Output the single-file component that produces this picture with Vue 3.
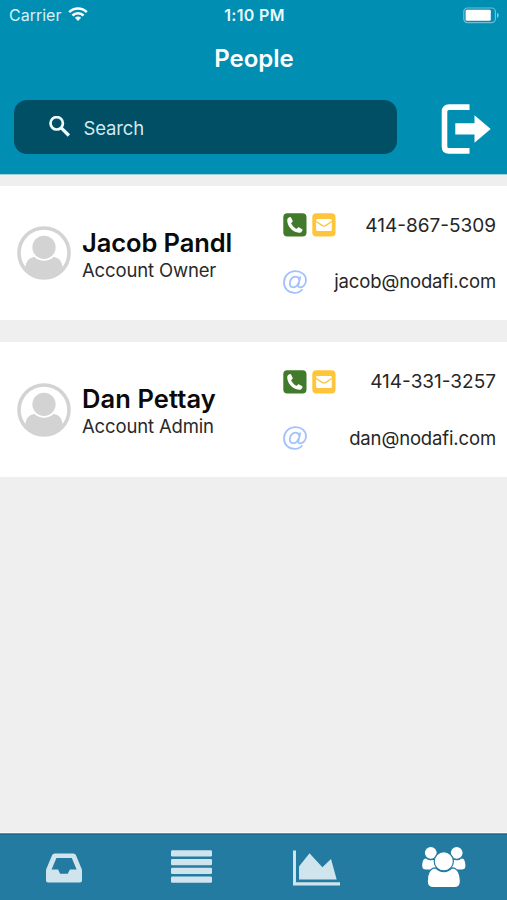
<script setup>
const people = [
  { name: 'Jacob Pandl', role: 'Account Owner', phone: '414-867-5309', email: 'jacob@nodafi.com' },
  { name: 'Dan Pettay', role: 'Account Admin', phone: '414-331-3257', email: 'dan@nodafi.com' },
]
</script>

<template>
  <div class="screen">
    <header class="header">
      <div class="status">
        <div class="carrier">
          <span>Carrier</span>
          <svg class="wifi" width="20" height="14" viewBox="0 0 20 14">
            <g fill="none" stroke="#fff" stroke-width="2.5">
              <path d="M1.2 5.2C6.2 .3 13.8 .3 18.8 5.2" />
              <path d="M4.4 8.5C7.6 5.4 12.4 5.4 15.6 8.5" />
            </g>
            <path d="M6.9 10.8C8.7 9.1 11.3 9.1 13.1 10.8L10 13.9Z" fill="#fff" />
          </svg>
        </div>
        <span class="time">1:10 PM</span>
        <svg class="battery" width="37" height="17" viewBox="0 0 37 17">
          <rect x=".8" y="1" width="31.6" height="14.6" rx="3.6" fill="none" stroke="#6fbdd3" stroke-width="1.2" />
          <rect x="2.6" y="2.8" width="25.2" height="11" rx="1.4" fill="#fff" />
          <path d="M34 5.7C36.4 6.8 36.4 9.8 34 10.9Z" fill="#7cc4d8" />
        </svg>
      </div>
      <h1 class="title">People</h1>
      <div class="tools">
        <div class="search">
          <svg width="22" height="22" viewBox="0 0 22 22" fill="none" stroke="#f0fcff">
            <circle cx="7.7" cy="7.3" r="6.2" stroke-width="2.7" />
            <path d="M12.2 11.8L19.9 19.5" stroke-width="3.2" />
          </svg>
          <span>Search</span>
        </div>
        <svg class="logout" width="50" height="50" viewBox="0 0 50 50">
          <path d="M28.5 3.1H8Q3.5 3.1 3.5 7.6V42.4Q3.5 46.9 8 46.9H28.5" fill="none" stroke="#fff" stroke-width="5.6" />
          <path d="M14.3 19.3H33.5V11.3L49.7 25L33.5 38.7V30.6H14.3Z" fill="#fff" />
        </svg>
      </div>
    </header>

    <main class="list">
      <article v-for="p in people" :key="p.email" class="card">
        <svg class="avatar" width="54" height="54" viewBox="0 0 54 54">
          <circle cx="27" cy="27" r="25" fill="#fff" stroke="#d3d3d3" stroke-width="3.6" />
          <path d="M8 43C9 34.5 12.5 31.5 17.5 31C22.5 36 31.5 36 36.5 31C41.5 31.5 45 34.5 46 43C36.5 55.5 17.5 55.5 8 43Z" fill="#d3d3d3" />
          <circle cx="27" cy="21.3" r="11.6" fill="#d3d3d3" />
        </svg>
        <div class="who">
          <div class="name">{{ p.name }}</div>
          <div class="role">{{ p.role }}</div>
        </div>
        <div class="contact">
          <div class="line">
            <div class="icons">
              <svg width="24" height="24" viewBox="0 0 24 24">
                <rect x=".3" y=".3" width="23.2" height="23.2" rx="4" fill="#417a2b" />
                <path d="M4.2 7.1C4.3 5.7 5.6 4.4 7 4.1C7.6 4 8 4.3 8.3 4.9L9.6 7.7C9.9 8.5 9.5 9 8.8 9.5C8.1 10 8.1 10.4 8.5 11.1C9.5 13 11 14.6 12.9 15.6C13.6 16 14 15.8 14.5 15.1C15 14.4 15.5 14.1 16.2 14.5L18.8 15.9C19.4 16.2 19.7 16.6 19.5 17.2C19 18.8 17.7 19.8 16 19.8C9.8 19.6 4 13.2 4.2 7.1Z" fill="#fff" />
              </svg>
              <svg width="24" height="24" viewBox="0 0 24 24">
                <rect x=".3" y=".3" width="23.2" height="23.2" rx="4" fill="#fec53a" />
                <rect x="4.1" y="5.9" width="15.7" height="12.2" rx="1.4" fill="#fff" />
                <path d="M3.8 8.2L10 12.4Q12 13.8 14 12.4L20 8.2" fill="none" stroke="#fec53a" stroke-width="1.3" />
              </svg>
            </div>
            <span class="phone">{{ p.phone }}</span>
          </div>
          <div class="line">
            <svg width="24" height="24" viewBox="0 0 24 24" fill="none" stroke="#a4c2fa" stroke-width="1.8" stroke-linejoin="round">
              <path d="M19.4 19.2C17.4 21.7 14.8 22.9 11.6 22.9C5.3 22.9 1 18.5 1 12.4C1 6.1 5.9 1.1 12.4 1.1C18.5 1.1 23 4.9 23 10.2C23 14.4 20 17.4 17.2 17.4C15.4 17.4 15.1 16.2 15.5 14.4L17.4 6.5" />
              <path d="M16.3 10.3C15.9 7.8 14.6 6.6 12.6 6.6C9.3 6.6 6.8 9.9 6.8 13.3C6.8 15.9 8.1 17.3 10.3 17.3C12.9 17.3 14.8 15.4 15.6 12.6" />
            </svg>
            <span class="email">{{ p.email }}</span>
          </div>
        </div>
      </article>
    </main>

    <nav class="tabs">
      <div class="tab">
        <svg class="inbox" width="36" height="30" viewBox="0 0 36 30">
          <path fill-rule="evenodd" d="M8.8 .4H27.4Q29.2 .4 29.9 2L35.6 15.8Q36 16.8 36 18V27.4Q36 29.4 34 29.4H2Q0 29.4 0 27.4V18Q0 16.8 .4 15.8L6.2 2Q6.9 .4 8.8 .4ZM10.4 4.9L5.6 16.5H12.1L14.1 20.8H21.8L23.9 16.5H30.6L25.8 4.9Z" fill="#d0e4ed" />
        </svg>
      </div>
      <div class="tab">
        <svg class="rows" width="41" height="34" viewBox="0 0 41 34" fill="#d0e4ed">
          <rect v-for="n in 4" :key="n" x="0" :y="(n - 1) * 8.7 + .3" width="41" height="6.3" rx="1.3" />
        </svg>
      </div>
      <div class="tab">
        <svg class="chart" width="47" height="36" viewBox="0 0 47 36" fill="#d0e4ed">
          <path d="M0 .4H3V32.2H47V35.5H0Z" />
          <path d="M6 29.5V16.5L16.5 3.3L29.4 17.2L38 9.1L43.7 29.5Z" />
        </svg>
      </div>
      <div class="tab">
        <svg class="group" width="44" height="42" viewBox="0 0 44 42" fill="#fff">
          <path d="M3.7 12.4C6.8 14.7 9.9 14.7 14 13.6L15.5 23.5H4Q.2 23.5 .2 20C.2 16.4 1 12.6 3.7 12.4Z" />
          <path d="M40 12.4C36.8 14.7 33.7 14.7 29.6 13.6L28.1 23.5H39.6Q43.4 23.5 43.4 20C43.4 16.4 42.6 12.6 40 12.4Z" />
          <g stroke="#237ba1" stroke-width="1.2">
            <circle cx="8.8" cy="6.8" r="6.5" />
            <circle cx="34.7" cy="6.8" r="6.5" />
            <path d="M13.5 21.8C18.7 26.8 25 26.8 30.1 21.8C36 22 38.4 28.5 38.4 35.2C38.4 39.6 35.9 41.7 32.3 41.7H11.3C7.7 41.7 5.2 39.6 5.2 35.2C5.2 28.5 7.6 22 13.5 21.8Z" />
            <circle cx="21.8" cy="15.3" r="9.6" />
          </g>
        </svg>
      </div>
    </nav>
  </div>
</template>

<style>
body {
  margin: 0;
}
</style>

<style scoped>
.screen {
  width: 507px;
  height: 900px;
  display: flex;
  flex-direction: column;
  background: #efefef;
  font-family: Inter, "Liberation Sans", sans-serif;
  overflow: hidden;
}
.header {
  height: 175px;
  box-sizing: border-box;
  background: #008eb3;
  border-bottom: 1px solid #a5cfda;
  color: #fff;
  flex: none;
}
.status {
  display: grid;
  grid-template-columns: 1fr auto 1fr;
  align-items: center;
  height: 30px;
  padding: 0 7px 0 9px;
  font-size: 16px;
}
.carrier {
  display: flex;
  align-items: center;
  gap: 7px;
  color: #d9f2f8;
}
.wifi {
  margin-top: -2px;
}
.time {
  font-weight: 600;
  font-size: 16px;
  letter-spacing: .3px;
  color: #e9fafd;
}
.battery {
  justify-self: end;
}
.title {
  margin: 0;
  height: 58px;
  line-height: 58px;
  text-align: center;
  padding-left: 1px;
  font-size: 24px;
  font-weight: 600;
}
.tools {
  display: flex;
  align-items: center;
  justify-content: space-between;
  padding: 12.4px 16px 0 14.4px;
}
.search {
  display: flex;
  align-items: center;
  gap: 12px;
  box-sizing: border-box;
  width: 383px;
  height: 54px;
  padding-left: 35px;
  border-radius: 13px;
  background: #004f65;
  color: #d5e8ee;
  font-size: 18.5px;
}
.search span {
  padding-top: 1px;
  letter-spacing: -.1px;
}
.logout {
  margin-top: 3px;
}
.list {
  flex: 1;
  display: flex;
  flex-direction: column;
  gap: 22px;
  padding-top: 10.5px;
}
.card {
  display: flex;
  align-items: center;
  box-sizing: border-box;
  height: 134.5px;
  padding: 1px 11px 0 17px;
  background: #fff;
}
.who {
  width: 200.6px;
  margin-left: 11px;
  padding-top: 3px;
  white-space: nowrap;
}
.name {
  font-size: 25.5px;
  line-height: 30px;
  font-weight: 600;
  letter-spacing: -.1px;
  color: #0a0a0a;
}
.card:nth-child(2) .name {
  letter-spacing: .1px;
}
.role {
  font-size: 18.5px;
  line-height: 24px;
  letter-spacing: -.15px;
  color: #292929;
}
.contact {
  flex: 1;
  display: flex;
  flex-direction: column;
  gap: 32.5px;
}
.line {
  display: flex;
  align-items: center;
  justify-content: space-between;
  height: 24px;
  color: #262626;
  font-size: 18.5px;
  white-space: nowrap;
}
.phone {
  font-size: 19px;
}
.email {
  padding-bottom: 1px;
  letter-spacing: -.14px;
}
.icons {
  display: flex;
  gap: 5px;
}
.tabs {
  display: grid;
  grid-template-columns: repeat(4, 1fr);
  height: 67px;
  box-sizing: border-box;
  border-top: 1px solid #578fa8;
  box-shadow: 0 -1px 0 #fafafa, inset 0 1px 0 #1e6c8f;
  background: #237ba1;
}
.tab {
  display: flex;
  align-items: center;
  justify-content: center;
}
.inbox {
  margin: 2px 0 0 1px;
}
.rows {
  margin: 0 0 0 2px;
}
.chart {
  margin-top: 2px;
}
</style>
